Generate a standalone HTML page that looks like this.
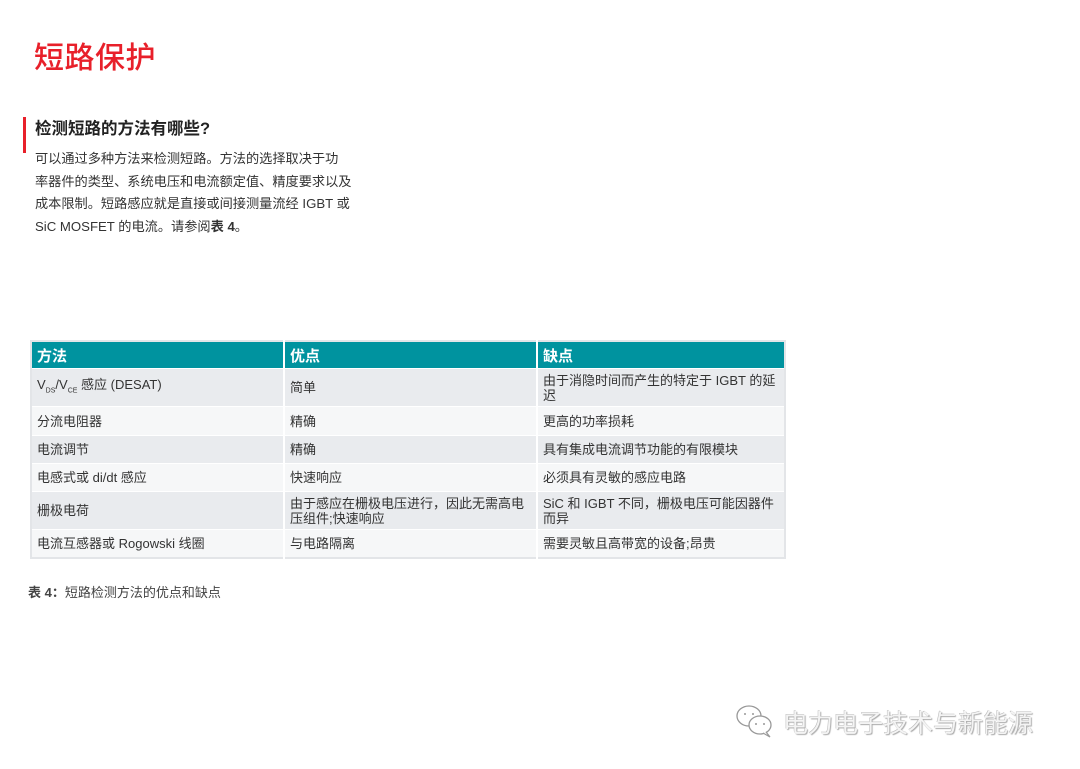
<!DOCTYPE html>
<html><head><meta charset="utf-8"><style>
html,body{margin:0;padding:0;background:#fff;}
body{width:1080px;height:769px;position:relative;overflow:hidden;font-family:"Liberation Sans","Noto Sans CJK SC",sans-serif;color:#333;}
.title{position:absolute;left:34px;top:33px;font-size:30px;color:#e8202a;font-weight:500;letter-spacing:0.5px;}
.bar{position:absolute;left:23px;top:117px;width:3px;height:36px;background:#e8202a;}
.h2{position:absolute;left:35px;top:115px;font-size:16.5px;font-weight:bold;color:#222;}
.p{position:absolute;left:35px;top:148px;font-size:13.2px;line-height:22.5px;color:#333;white-space:nowrap;}
table{position:absolute;left:30px;top:340px;width:756px;border-collapse:collapse;font-size:13px;color:#333;border:2px solid #e3e5e8;}
th{background:#00939f;color:#fff;text-align:left;font-size:15px;font-weight:bold;height:26px;padding:0 5px;border-right:2px solid #fff;}
td{padding:2px 5px;border-right:2px solid #fff;border-top:1px solid #fff;line-height:15px;vertical-align:middle;}
tr.g td{background:#e9ebee;}
tr.w td{background:#f6f7f8;}
th:last-child,td:last-child{border-right:none;}
sub{font-size:7px;}
.cap{position:absolute;left:28px;top:582px;font-size:13px;color:#444;}
.wm{position:absolute;left:783px;top:704px;font-size:25px;color:#f4f4f4;text-shadow:1px 1px 1px #aaa,-0.5px -0.5px 0 #bbb;}
</style></head><body>
<div class="title">短路保护</div>
<div class="bar"></div>
<div class="h2">检测短路的方法有哪些?</div>
<div class="p">可以通过多种方法来检测短路。方法的选择取决于功<br>率器件的类型、系统电压和电流额定值、精度要求以及<br>成本限制。短路感应就是直接或间接测量流经 IGBT 或<br>SiC MOSFET 的电流。请参阅<b>表 4</b>。</div>
<table>
<tr><th style="width:241px">方法</th><th style="width:241px">优点</th><th>缺点</th></tr>
<tr class="g" style="height:38px"><td>V<sub>DS</sub>/V<sub>CE</sub> 感应 (DESAT)</td><td>简单</td><td>由于消隐时间而产生的特定于 IGBT 的延迟</td></tr>
<tr class="w" style="height:29px"><td>分流电阻器</td><td>精确</td><td>更高的功率损耗</td></tr>
<tr class="g" style="height:28px"><td>电流调节</td><td>精确</td><td>具有集成电流调节功能的有限模块</td></tr>
<tr class="w" style="height:28px"><td>电感式或 di/dt 感应</td><td>快速响应</td><td>必须具有灵敏的感应电路</td></tr>
<tr class="g" style="height:38px"><td>栅极电荷</td><td>由于感应在栅极电压进行，因此无需高电压组件;快速响应</td><td>SiC 和 IGBT 不同，栅极电压可能因器件而异</td></tr>
<tr class="w" style="height:28px"><td>电流互感器或 Rogowski 线圈</td><td>与电路隔离</td><td>需要灵敏且高带宽的设备;昂贵</td></tr>
</table>
<div class="cap"><b>表 4：</b>短路检测方法的优点和缺点</div>
<svg style="position:absolute;left:735px;top:703px" width="42" height="36" viewBox="0 0 42 36">
<ellipse cx="14" cy="13" rx="12" ry="10" fill="#fff" stroke="#999" stroke-width="1.3"/>
<ellipse cx="25" cy="22" rx="11" ry="9" fill="#fff" stroke="#999" stroke-width="1.3"/>
<path d="M31 29 L35 34 L28 30" fill="#fff" stroke="#999" stroke-width="1.2"/>
<circle cx="10" cy="11" r="1" fill="#999"/><circle cx="18" cy="11" r="1" fill="#999"/>
<circle cx="21" cy="21" r="1" fill="#999"/><circle cx="29" cy="21" r="1" fill="#999"/>
</svg>
<div class="wm">电力电子技术与新能源</div>
</body></html>
